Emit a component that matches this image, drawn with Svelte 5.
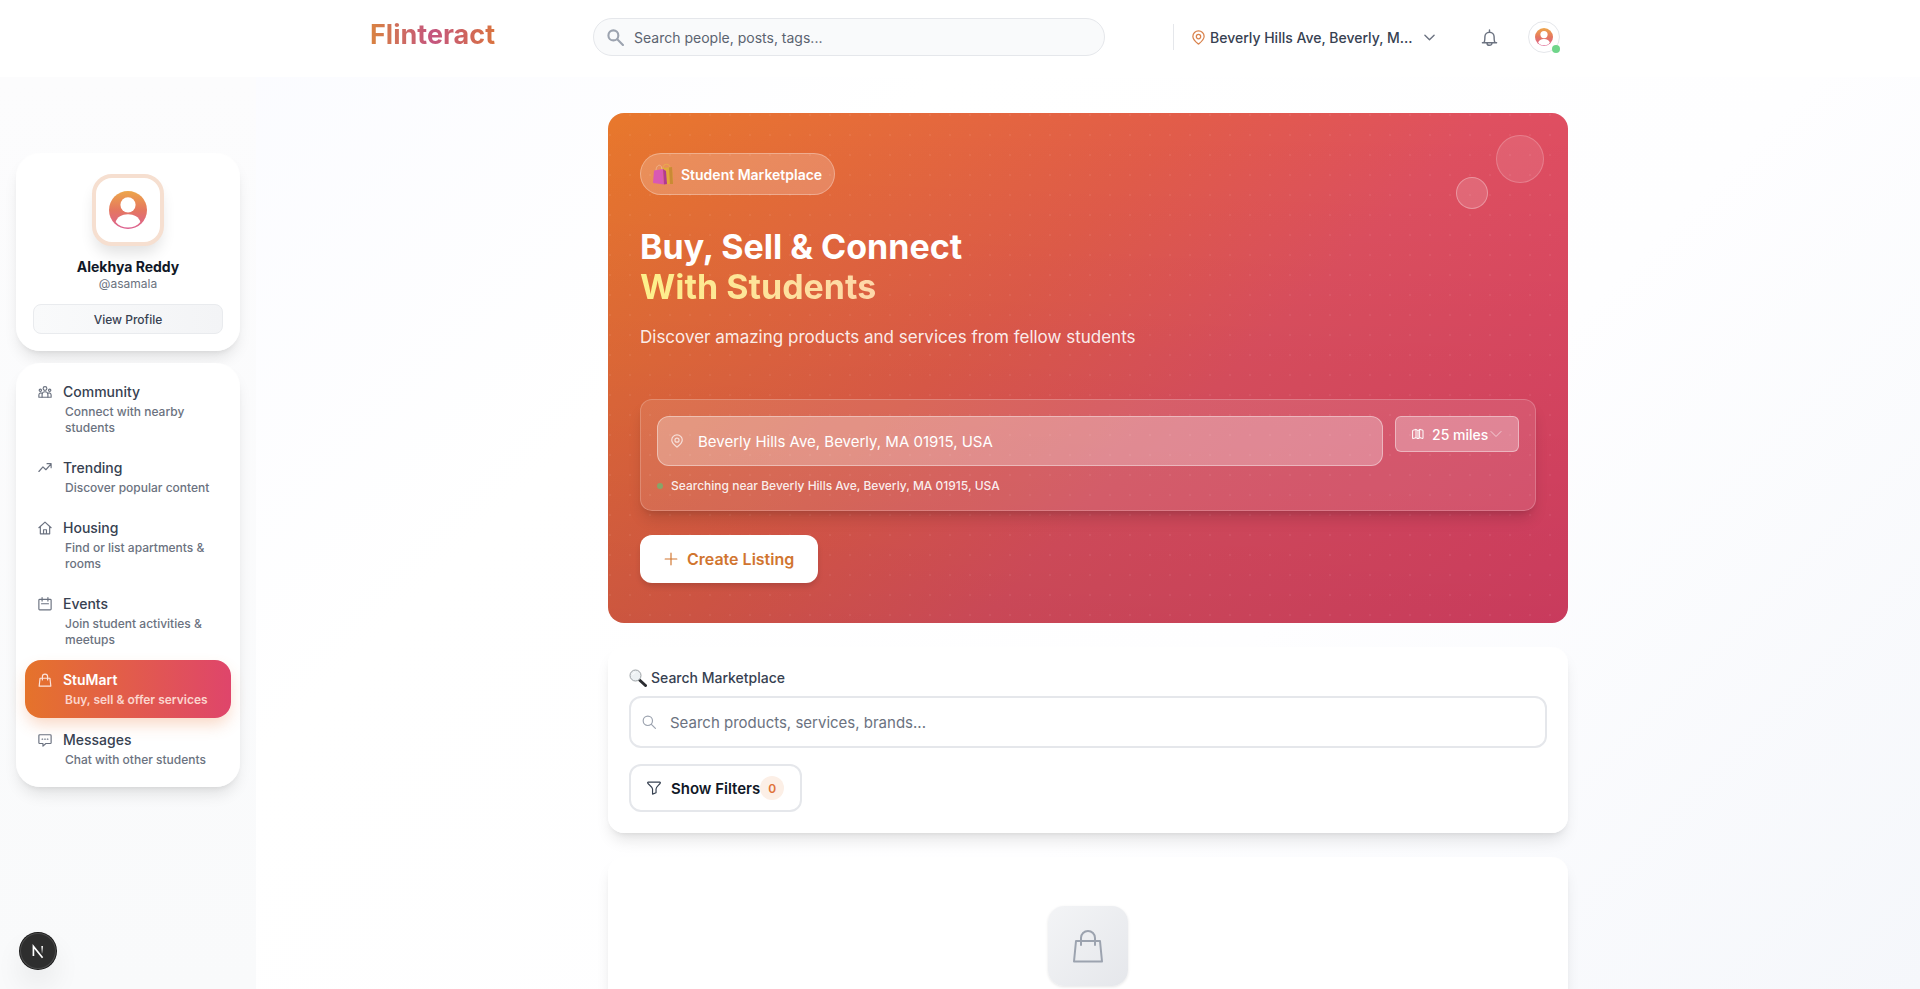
<script lang="ts">
  type NavItem = { id: string; label: string; description: string };

  const navItems: NavItem[] = [
    { id: 'community', label: 'Community', description: 'Connect with nearby students' },
    { id: 'trending', label: 'Trending', description: 'Discover popular content' },
    { id: 'housing', label: 'Housing', description: 'Find or list apartments & rooms' },
    { id: 'events', label: 'Events', description: 'Join student activities & meetups' },
    { id: 'stumart', label: 'StuMart', description: 'Buy, sell & offer services' },
    { id: 'messages', label: 'Messages', description: 'Chat with other students' },
  ];

  let active = $state('stumart');
  let siteQuery = $state('');
  let query = $state('');
  let location = $state('Beverly Hills Ave, Beverly, MA 01915, USA');
  let distance = $state('25');
  let filterCount = $state(0);
</script>

{#snippet pin()}
  <svg class="icon" viewBox="0 0 24 24" aria-hidden="true">
    <path d="M12 22.5C9 20 3 15.500 3 10.200a9 8.700 0 0 1 18 0C21 15.500 15 20 12 22.500Z" />
    <circle cx="12" cy="10.500" r="3.500" />
  </svg>
{/snippet}

{#snippet chevron()}
  <svg class="icon" viewBox="0 0 24 24" aria-hidden="true"><path d="m2 7 10 10L22 7" /></svg>
{/snippet}

{#snippet person(id: string)}
  <svg class="person" viewBox="0 0 40 40" aria-hidden="true">
    <defs>
      <linearGradient id={id} x1="0" y1="0" x2="0" y2="1">
        <stop offset="0" stop-color="#eda64a" />
        <stop offset="0.500" stop-color="#e5775f" />
        <stop offset="1" stop-color="#dc6192" />
      </linearGradient>
    </defs>
    <circle cx="20" cy="20" r="20" fill="url(#{id})" />
    <circle cx="20" cy="14.500" r="8" fill="#fff" />
    <path d="M7 32.500C8.500 27.500 13.500 24.500 20 24.500s11.500 3 13 8C30 36.500 25 38.500 20 38.500S10 36.500 7 32.500Z" fill="#fff" />
  </svg>
{/snippet}

{#snippet navIcon(id: string)}
  <svg class="icon" viewBox="0 0 24 24" aria-hidden="true">
    {#if id === 'community'}
      <circle cx="12" cy="6" r="3.200" />
      <circle cx="4" cy="9" r="2" />
      <circle cx="20" cy="9" r="2" />
      <path d="M7 21v-4.500a5 5 0 0 1 10 0V21Z" />
      <path d="M7 21H1.500v-4a3.500 3.500 0 0 1 5-3M17 21h5.500v-4a3.500 3.500 0 0 0-5-3" />
    {:else if id === 'trending'}
      <path d="m1.500 18 7-8 5 5 9-10M15.500 4.500h7v7" />
    {:else if id === 'housing'}
      <path d="M1.500 11.500 12 2l10.500 9.500M4 9.500V22h16V9.500M9.500 22v-7h5v7" />
    {:else if id === 'events'}
      <rect x="1.500" y="4" width="21" height="18" rx="1.500" />
      <path d="M7 1v6M17 1v6M6 11.500h12" />
    {:else if id === 'stumart'}
      <path d="M3.500 9h17L22 22.500H2ZM7.500 12V6.500a4.500 4.500 0 0 1 9 0V12" />
    {:else}
      <path d="M3 3h18a1.500 1.500 0 0 1 1.500 1.500v12A1.500 1.500 0 0 1 21 18h-7.500L8.500 22.500V18H3a1.500 1.500 0 0 1-1.500-1.500v-12A1.500 1.500 0 0 1 3 3Z" />
      <path d="M7 10.500h1M11.500 10.500h1M16 10.500h1" />
    {/if}
  </svg>
{/snippet}

<div class="app">
  <header class="topbar">
    <div class="topbar-inner">
      <a class="logo" href="#home">Flinteract</a>

      <label class="site-search">
        <svg class="icon" viewBox="0 0 24 24" aria-hidden="true">
          <circle cx="9" cy="9" r="7" />
          <path d="m14.500 14.500 8 8" />
        </svg>
        <input type="text" bind:value={siteQuery} placeholder="Search people, posts, tags..." aria-label="Search" />
      </label>

      <div class="topbar-actions">
        <button class="location-btn">
          {@render pin()}
          <span class="location-name">Beverly Hills Ave, Beverly, M...</span>
          {@render chevron()}
        </button>
        <button class="bell-btn" aria-label="Notifications">
          <svg class="icon" viewBox="0 0 24 24" aria-hidden="true">
            <path d="M2 19.500h20M4 19.500c1.500-1.500 1.500-3 1.500-8.500a6.500 6.500 0 0 1 13 0c0 5.500 0 7 1.500 8.500M12 4.500V1.500M8.500 20a3.500 3 0 0 0 7 0" />
          </svg>
        </button>
        <button class="avatar-btn" aria-label="Account">
          {@render person('avatar-small')}
          <span class="online"></span>
        </button>
      </div>
    </div>
  </header>

  <div class="body">
    <aside class="sidebar">
      <section class="card profile">
        <div class="profile-avatar">{@render person('avatar-large')}</div>
        <h2 class="profile-name">Alekhya Reddy</h2>
        <p class="profile-handle">@asamala</p>
        <button class="profile-btn">View Profile</button>
      </section>

      <nav class="card nav">
        {#each navItems as item}
          <a
            href="#{item.id}"
            class="nav-item"
            class:active={active === item.id}
            onclick={() => (active = item.id)}
          >
            {@render navIcon(item.id)}
            <span class="nav-label">{item.label}</span>
            <span class="nav-description">{item.description}</span>
          </a>
        {/each}
      </nav>
    </aside>

    <main class="main">
      <div class="content">
        <section class="hero">
          <span class="bubble bubble-large"></span>
          <span class="bubble bubble-small"></span>

          <div class="badge">
            <svg class="bags" viewBox="0 0 20 22" aria-hidden="true">
              <path d="M10 5C10 0 17 0 17 5" fill="none" stroke="#e8b04c" />
              <path d="m8 5 11-1 1 17H8Z" fill="#e2a93c" />
              <path d="M16 4.500 19 4l1 17h-3Z" fill="#c98a35" />
              <path d="M3 8C3 1 9 0 9 7" fill="none" stroke="#f0b58e" />
              <path d="M1 7.500 10 6l1 15.500L0 20Z" fill="#d958b4" />
              <path d="m10 6 3 2 1 13-3 .500Z" fill="#b23a90" />
            </svg>
            Student Marketplace
          </div>

          <h1 class="hero-title">Buy, Sell &amp; Connect<br /><span class="highlight">With Students</span></h1>
          <p class="hero-text">Discover amazing products and services from fellow students</p>

          <div class="finder">
            <div class="finder-row">
              <label class="finder-location">
                {@render pin()}
                <input type="text" bind:value={location} aria-label="Location" />
              </label>
              <label class="finder-distance">
                <svg class="icon" viewBox="0 0 24 24" aria-hidden="true">
                  <path d="M2 4.500 8 3v16.500L2 21ZM8 3l4 2 4-2M8 19.500l4 2 4-2M12 5v16M16 3l6 1.500V21l-6-1.500Z" />
                </svg>
                <select bind:value={distance} aria-label="Distance">
                  <option value="5">5 miles</option>
                  <option value="10">10 miles</option>
                  <option value="25">25 miles</option>
                  <option value="50">50 miles</option>
                </select>
                {@render chevron()}
              </label>
            </div>
            <p class="finder-status"><span class="dot"></span>Searching near {location}</p>
          </div>

          <button class="create-btn">
            <svg class="icon" viewBox="0 0 24 24" aria-hidden="true"><path d="M12 2v20M2 12h20" /></svg>
            Create Listing
          </button>
        </section>

        <section class="card search-card">
          <label class="search-label" for="market-search">
            <svg class="magnifier" viewBox="0 0 18 18" aria-hidden="true">
              <path d="m10.500 11 6 5.500" stroke="#2b2d31" stroke-width="3" stroke-linecap="round" />
              <circle cx="6.500" cy="6.500" r="5.500" fill="#edf1f3" stroke="#9ba0a4" />
              <path d="M3.500 6a3.500 3.500 0 0 1 3-2.500" fill="none" stroke="#fff" />
            </svg>
            Search Marketplace
          </label>
          <div class="search-field">
            <svg class="icon" viewBox="0 0 24 24" aria-hidden="true">
              <circle cx="10" cy="10" r="8" />
              <path d="m16 16 7 7" />
            </svg>
            <input id="market-search" type="text" bind:value={query} placeholder="Search products, services, brands..." />
          </div>
          <button class="filter-btn">
            <svg class="icon" viewBox="0 0 24 24" aria-hidden="true">
              <path d="M2 2h20a1 1 0 0 1 .800 1.500c-.800 2.500-7.300 6.500-7.300 10V20l-6 2.500v-9C9.500 10 2 6 1.200 3.500A1 1 0 0 1 2 2Z" />
            </svg>
            <span>Show Filters</span>
            <span class="filter-count">{filterCount}</span>
          </button>
        </section>

        <section class="card empty-card">
          <div class="empty-tile">
            <svg class="icon" viewBox="0 0 32 34" aria-hidden="true">
              <path d="M4 12h24l2 20.500H2ZM9 16V9a7 7 0 0 1 14 0v7" />
            </svg>
          </div>
        </section>
      </div>
    </main>
  </div>

  <button class="dev-btn" aria-label="Developer tools">
    <svg viewBox="0 0 24 24" aria-hidden="true">
      <defs>
        <linearGradient id="dev-fade" x1="0" y1="0" x2="0" y2="1">
          <stop offset="0" stop-color="#fff" />
          <stop offset="1" stop-color="#fff" stop-opacity="0.100" />
        </linearGradient>
      </defs>
      <path d="M6.500 18V6.500L17.500 20" fill="none" stroke="#fff" stroke-width="2" />
      <rect x="16" y="6" width="2" height="9" fill="url(#dev-fade)" />
    </svg>
  </button>
</div>

<style>
  :global(body) {
    margin: 0;
    background: #fff;
  }

  .app {
    height: 100vh;
    display: flex;
    flex-direction: column;
    font-family: Inter, 'Liberation Sans', sans-serif;
    color: #1f2937;
    background: linear-gradient(135deg, #f9faff 0%, #fff 35%, #fefeff 65%, #f5f7fb 100%);
  }

  .app :global(*) {
    box-sizing: border-box;
  }

  button,
  input,
  select {
    font: inherit;
    color: inherit;
    border: none;
    background: none;
    padding: 0;
    margin: 0;
    outline: none;
  }

  button {
    cursor: pointer;
  }

  a {
    color: inherit;
    text-decoration: none;
  }

  h1,
  h2,
  p {
    margin: 0;
  }

  input {
    flex: 1;
    min-width: 0;
  }

  .icon {
    width: 14px;
    height: 14px;
    flex-shrink: 0;
    fill: none;
    stroke: currentColor;
    stroke-width: 2;
    stroke-linejoin: round;
    stroke-linecap: round;
  }

  .card {
    background: rgba(255, 255, 255, 0.9);
    border: 1px solid rgba(255, 255, 255, 0.9);
    box-shadow:
      0 10px 15px -3px rgba(0, 0, 0, 0.1),
      0 4px 6px -4px rgba(0, 0, 0, 0.1);
  }

  /* top bar */
  .topbar {
    flex-shrink: 0;
    background: #fff;
    padding: 18px 0 21px;
  }

  .topbar-inner {
    max-width: 1280px;
    margin: 0 auto;
    padding: 0 40px 0 50px;
    display: flex;
    align-items: center;
  }

  .logo {
    font-size: 27px;
    line-height: 32px;
    font-weight: 700;
    padding-bottom: 4px;
    color: transparent;
    background: linear-gradient(90deg, #d98340, #c4557f 50%, #d9733f);
    background-clip: text;
  }

  .site-search {
    width: 512px;
    height: 38px;
    display: flex;
    align-items: center;
    gap: 10px;
    padding: 0 14px 0 13px;
    margin: 0 auto 0 98px;
    border: 1px solid #e5e7eb;
    border-radius: 20px;
    background: #f9fafb;
    font-size: 14px;
    color: #9ca3af;
  }

  .site-search .icon {
    width: 17px;
    height: 17px;
    stroke-width: 3;
  }

  .site-search input {
    color: #374151;
  }

  .site-search input::placeholder {
    color: #5b6370;
    opacity: 1;
  }

  .topbar-actions {
    display: flex;
    align-items: center;
  }

  .location-btn {
    height: 26px;
    display: flex;
    align-items: center;
    gap: 4px;
    padding-left: 17px;
    border-left: 1px solid #e5e7eb;
    color: #6b7280;
  }

  .location-btn .icon:first-child {
    color: #d9824c;
    width: 15px;
    height: 15px;
  }

  .location-btn .icon:last-child {
    width: 11px;
    height: 11px;
    stroke-width: 3;
  }

  .location-name {
    width: 210px;
    text-align: left;
    white-space: nowrap;
    font-size: 14px;
    font-weight: 500;
    color: #374151;
  }

  .bell-btn {
    display: flex;
    margin: 0 30px 0 46px;
    color: #6b7280;
  }

  .bell-btn .icon {
    width: 17px;
    height: 17px;
  }

  .person {
    display: block;
    width: 38px;
    height: 38px;
  }

  .avatar-btn {
    position: relative;
    display: flex;
    align-items: center;
    justify-content: center;
    width: 32px;
    height: 32px;
    border: 1px solid #e5e7eb;
    border-radius: 50%;
  }

  .avatar-btn .person {
    width: 18px;
    height: 18px;
  }

  .online {
    position: absolute;
    right: -1px;
    bottom: -1px;
    width: 8px;
    height: 8px;
    border-radius: 50%;
    background: #6fd58a;
  }

  .body {
    flex: 1;
    min-height: 0;
    display: flex;
  }

  /* sidebar */
  .sidebar {
    width: 256px;
    flex-shrink: 0;
    display: flex;
    flex-direction: column;
    gap: 12px;
    padding: 76px 16px 16px;
    background: linear-gradient(#fcfcfd, #f9fafb);
  }

  .sidebar .card {
    border-radius: 24px;
  }

  .profile {
    display: flex;
    flex-direction: column;
    align-items: center;
    padding: 20px 16px 16px;
  }

  .profile-avatar {
    width: 72px;
    height: 72px;
    display: flex;
    align-items: center;
    justify-content: center;
    border: 4px solid #f6dfd0;
    border-radius: 20px;
    background: #fff;
    box-shadow: 0 10px 15px -3px rgba(0, 0, 0, 0.12);
  }

  .profile-name {
    margin-top: 12px;
    font-size: 14px;
    line-height: 18px;
    font-weight: 700;
    color: #111827;
  }

  .profile-handle {
    font-size: 12px;
    line-height: 16px;
    color: #6b7280;
  }

  .profile-btn {
    width: 100%;
    height: 30px;
    margin-top: 12px;
    border: 1px solid #e9ebee;
    border-radius: 8px;
    background: linear-gradient(90deg, #f9fafb, #f3f4f6);
    font-size: 12px;
    font-weight: 500;
    color: #374151;
  }

  .nav {
    display: flex;
    flex-direction: column;
    gap: 2px;
    padding: 8px;
  }

  .nav-item {
    display: grid;
    grid-template-columns: 16px 1fr;
    column-gap: 10px;
    row-gap: 2px;
    align-items: center;
    justify-items: center;
    padding: 10px 12px;
    border-radius: 16px;
    color: #6b7280;
  }

  .nav-label {
    justify-self: start;
    font-size: 14px;
    line-height: 20px;
    font-weight: 500;
    color: #374151;
  }

  .nav-description {
    grid-column: 1 / -1;
    justify-self: start;
    padding-left: 28px;
    font-size: 12px;
    line-height: 16px;
    font-weight: 500;
  }

  .nav-item.active {
    color: #fbe3dc;
    background: linear-gradient(90deg, #e5732b, #df456b);
    box-shadow: 0 8px 16px -2px rgba(234, 122, 60, 0.3);
  }

  .nav-item.active .nav-label {
    color: #fff;
    font-weight: 600;
  }

  .nav-item.active .nav-description {
    color: #fbd5cd;
    font-weight: 600;
  }

  /* main column */
  .main {
    flex: 1;
    min-width: 0;
    overflow-y: auto;
    scrollbar-width: none;
    padding: 36px 24px 24px;
  }

  .content {
    max-width: 960px;
    margin: 0 auto;
    display: flex;
    flex-direction: column;
    gap: 24px;
  }

  .content .card {
    border-radius: 16px;
  }

  .hero {
    position: relative;
    display: flex;
    flex-direction: column;
    align-items: flex-start;
    padding: 40px 32px;
    border-radius: 16px;
    color: #fff;
    background:
      radial-gradient(circle at 2px 2px, rgba(255, 255, 255, 0.06) 1px, transparent 1px) 0 0 / 20px 20px,
      linear-gradient(rgba(0, 0, 0, 0), rgba(0, 0, 0, 0.1)),
      linear-gradient(135deg, #e8782c, #e25c4a 40%, #df5060 60%, #df4167);
  }

  .bubble {
    position: absolute;
    border: 1px solid rgba(255, 255, 255, 0.2);
    border-radius: 50%;
    background: rgba(255, 255, 255, 0.1);
  }

  .bubble-large {
    top: 22px;
    right: 24px;
    width: 48px;
    height: 48px;
  }

  .bubble-small {
    top: 64px;
    right: 80px;
    width: 32px;
    height: 32px;
    border-color: rgba(255, 255, 255, 0.3);
    background: rgba(255, 255, 255, 0.15);
  }

  .badge {
    display: flex;
    align-items: center;
    gap: 8px;
    height: 42px;
    padding: 0 12px;
    border: 1px solid rgba(255, 255, 255, 0.3);
    border-radius: 21px;
    background: rgba(255, 255, 255, 0.2);
    font-size: 14px;
    font-weight: 600;
  }

  .bags {
    width: 20px;
    height: 22px;
  }

  .hero-title {
    margin-top: 32px;
    font-size: 34px;
    line-height: 40px;
    font-weight: 700;
  }

  .highlight {
    color: transparent;
    background: linear-gradient(90deg, #fdf08a, #fed7aa);
    background-clip: text;
  }

  .hero-text {
    margin-top: 16px;
    font-size: 17px;
    line-height: 28px;
    color: rgba(255, 255, 255, 0.9);
  }

  .finder {
    width: 100%;
    margin-top: 48px;
    padding: 16px;
    border: 1px solid rgba(255, 255, 255, 0.2);
    border-radius: 12px;
    background: rgba(255, 255, 255, 0.1);
    box-shadow:
      0 10px 15px -3px rgba(0, 0, 0, 0.14),
      0 4px 6px -4px rgba(0, 0, 0, 0.14);
  }

  .finder-row {
    display: flex;
    align-items: flex-start;
    gap: 12px;
  }

  .finder-location,
  .finder-distance {
    display: flex;
    align-items: center;
    border: 1px solid rgba(255, 255, 255, 0.4);
    background: rgba(255, 255, 255, 0.28);
  }

  .finder-location {
    flex: 1;
    height: 50px;
    gap: 14px;
    padding: 0 16px 0 12px;
    border-radius: 12px;
    font-size: 15px;
  }

  .finder-location .icon {
    color: rgba(255, 255, 255, 0.7);
  }

  .finder-distance {
    height: 36px;
    padding: 0 16px;
    border-radius: 6px;
    font-size: 14px;
    font-weight: 500;
  }

  .finder-distance .icon {
    width: 12px;
    height: 12px;
  }

  .finder-distance .icon:last-child {
    color: rgba(255, 255, 255, 0.6);
  }

  .finder-distance select {
    appearance: none;
    margin: 0 1px 0 8px;
  }

  .finder-distance option {
    color: #1f2937;
  }

  .finder-status {
    display: flex;
    align-items: center;
    gap: 8px;
    margin-top: 12px;
    font-size: 12px;
    line-height: 16px;
    font-weight: 500;
    color: rgba(255, 255, 255, 0.9);
  }

  .dot {
    width: 6px;
    height: 6px;
    border-radius: 50%;
    background: #86a568;
  }

  .create-btn {
    display: flex;
    align-items: center;
    gap: 9px;
    height: 48px;
    margin-top: 24px;
    padding: 0 24px;
    border-radius: 12px;
    background: #fff;
    box-shadow: 0 4px 6px -1px rgba(0, 0, 0, 0.15);
    font-size: 16px;
    font-weight: 600;
    color: #d1752f;
  }

  /* search card */
  .search-card {
    display: flex;
    flex-direction: column;
    align-items: flex-start;
    padding: 20px;
  }

  .search-label {
    display: flex;
    align-items: center;
    gap: 4px;
    font-size: 14px;
    line-height: 20px;
    font-weight: 500;
    color: #374151;
  }

  .magnifier {
    width: 18px;
    height: 18px;
  }

  .search-field {
    align-self: stretch;
    display: flex;
    align-items: center;
    gap: 14px;
    height: 52px;
    margin: 8px 0 16px;
    padding: 0 16px 0 11px;
    border: 2px solid #e5e7eb;
    border-radius: 12px;
    background: #fff;
    font-size: 15px;
  }

  .search-field .icon {
    color: #9ca3af;
  }

  .search-field input::placeholder {
    color: #6b7280;
    opacity: 1;
  }

  .filter-btn {
    display: flex;
    align-items: center;
    height: 48px;
    padding: 0 16px;
    border: 2px solid #e5e7eb;
    border-radius: 12px;
    background: #fff;
    font-size: 15px;
    font-weight: 600;
    color: #111827;
  }

  .filter-btn .icon {
    margin-right: 10px;
    color: #374151;
  }

  .filter-count {
    width: 24px;
    height: 24px;
    display: flex;
    align-items: center;
    justify-content: center;
    border-radius: 50%;
    background: #fcefe6;
    font-size: 12px;
    font-weight: 600;
    color: #e0733a;
  }

  .empty-card {
    display: flex;
    justify-content: center;
    padding: 48px;
  }

  .empty-tile {
    width: 80px;
    height: 80px;
    display: flex;
    align-items: center;
    justify-content: center;
    border-radius: 16px;
    background: linear-gradient(135deg, #f3f4f6, #e5e7eb);
    box-shadow: 0 1px 3px rgba(0, 0, 0, 0.1);
  }

  .empty-tile .icon {
    width: 32px;
    height: 34px;
    color: #9ca3af;
  }

  .dev-btn {
    position: fixed;
    left: 20px;
    bottom: 20px;
    width: 36px;
    height: 36px;
    display: flex;
    align-items: center;
    justify-content: center;
    border-radius: 50%;
    background: #2e2e2e;
    box-shadow:
      inset 0 0 0 1px #4a4a4a,
      0 0 0 1px #171717,
      0 16px 32px -8px rgba(0, 0, 0, 0.24);
  }

  .dev-btn svg {
    width: 20px;
    height: 20px;
  }
</style>
